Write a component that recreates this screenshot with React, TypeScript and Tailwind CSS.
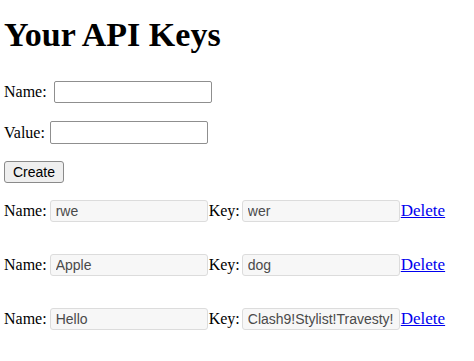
export default function App() {
  const keys = [
    { name: 'rwe', value: 'wer' },
    { name: 'Apple', value: 'dog' },
    { name: 'Hello', value: 'Clash9!Stylist!Travesty!' },
  ]

  const formInput =
    'h-[22px] w-[158px] rounded-[2px] border border-[#8f8f8f] bg-white px-1 text-[13px] outline-none'
  const listInput =
    'h-[22px] w-[158px] rounded-[3px] border border-[#dcdcdc] bg-[#f7f7f7] pl-[5px] pr-1 text-[14px] text-[#4a4a4a] outline-none'

  return (
    <div className="min-h-[361px] bg-white pl-[4px] text-[16px] text-black [font-family:'Liberation_Serif',serif]">
      <h1 className="mt-[16px] text-[34px] font-bold leading-[37px]">Your API Keys</h1>

      {/* create form */}
      <div className="mt-[28px] flex h-[22px] items-center">
        <span>Name:</span>
        <input className={`ml-[7px] ${formInput}`} />
      </div>
      <div className="mt-[18px] flex h-[23px] items-center">
        <span>Value:</span>
        <input className={`ml-[5px] h-[23px] ${formInput}`} />
      </div>
      <div className="mt-[17px] flex h-[22px] items-center">
        <button className="h-[22px] w-[60px] rounded-[3px] border border-[#8a8a8a] bg-[#efefef] text-[14px] leading-none [font-family:'Liberation_Sans',Arial,sans-serif]">
          Create
        </button>
      </div>

      {/* existing keys */}
      {keys.map((k, i) => (
        <div
          key={k.name}
          className={`flex h-[22px] items-center ${i === 0 ? 'mt-[17px]' : 'mt-[32px]'}`}
        >
          <span>Name:</span>
          <input
            readOnly
            value={k.name}
            className={`ml-[3px] ${listInput} [font-family:'Liberation_Sans',Arial,sans-serif]`}
          />
          <span className="ml-[1px]">Key:</span>
          <input
            readOnly
            value={k.value}
            className={`ml-[2px] ${listInput} [font-family:'Liberation_Sans',Arial,sans-serif]`}
          />
          <a href="#" className="ml-[1px] text-[17px] text-[#0000ee] underline">
            Delete
          </a>
        </div>
      ))}
    </div>
  )
}
